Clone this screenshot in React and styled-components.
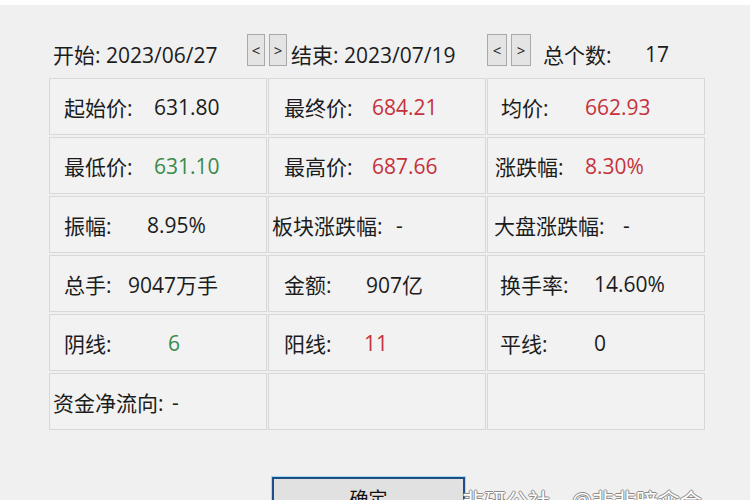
import React from 'react'
import styled, { createGlobalStyle } from 'styled-components'

const GlobalStyle = createGlobalStyle`
  html, body {
    margin: 0;
    padding: 0;
    background: #f0f0f0;
  }
  body {
    font-family: "Open Sans", "Noto Sans CJK SC", sans-serif;
  }
`

const RED = '#c5323d'
const GREEN = '#3a8a4c'

const rows = [
  [
    { pad: 14, w: 90, label: '起始价:', value: '631.80' },
    { pad: 15, w: 88, label: '最终价:', value: '684.21', color: RED },
    { pad: 13, w: 84, label: '均价:', value: '662.93', color: RED },
  ],
  [
    { pad: 14, w: 90, label: '最低价:', value: '631.10', color: GREEN },
    { pad: 15, w: 88, label: '最高价:', value: '687.66', color: RED },
    { pad: 7, w: 90, label: '涨跌幅:', value: '8.30%', color: RED },
  ],
  [
    { pad: 14, w: 83, label: '振幅:', value: '8.95%' },
    { pad: 3, w: 124, label: '板块涨跌幅:', value: '-' },
    { pad: 6, w: 129, label: '大盘涨跌幅:', value: '-' },
  ],
  [
    { pad: 14, w: 64, label: '总手:', value: '9047万手' },
    { pad: 15, w: 82, label: '金额:', value: '907亿' },
    { pad: 12, w: 94, label: '换手率:', value: '14.60%' },
  ],
  [
    { pad: 14, w: 104, label: '阴线:', value: '6', color: GREEN },
    { pad: 15, w: 80, label: '阳线:', value: '11', color: RED },
    { pad: 12, w: 94, label: '平线:', value: '0' },
  ],
  [
    { pad: 3, w: 119, label: '资金净流向:', value: '-' },
    null,
    null,
  ],
]

export default function App() {
  return (
    <>
      <GlobalStyle />
      <Window>
        <Body>
          <Header>
            <HeaderField w={194}>开始: 2023/06/27</HeaderField>
            <NavPair>
              <NavButton w={18}>&lt;</NavButton>
              <NavButton w={18}>&gt;</NavButton>
            </NavPair>
            <HeaderField w={200} lead={4}>结束: 2023/07/19</HeaderField>
            <NavPair>
              <NavButton w={20}>&lt;</NavButton>
              <NavButton w={20}>&gt;</NavButton>
            </NavPair>
            <HeaderField w={114} lead={12}>总个数:</HeaderField>
            <HeaderField>17</HeaderField>
          </Header>

          <StatGrid>
            {rows.flat().map((c, i) =>
              c ? (
                <Cell key={i} pad={c.pad}>
                  <Label w={c.w}>{c.label}</Label>
                  <Value color={c.color}>{c.value}</Value>
                </Cell>
              ) : (
                <Cell key={i} />
              )
            )}
          </StatGrid>

          <Footer>
            <OkButton>确定</OkButton>
          </Footer>
        </Body>
        <Watermark>非研公社，@非非暗伞合</Watermark>
      </Window>
    </>
  )
}

const Window = styled.div`
  position: relative;
  width: 750px;
  height: 500px;
  overflow: hidden;
  background: #f0f0f0;
  border-top: 5px solid #ffffff;
  box-sizing: border-box;
`

const Body = styled.div`
  display: flex;
  flex-direction: column;
  padding: 32px 0 0 49px;
  border-left: 6px solid #f6f6f6;
  margin-left: -6px;
`

const Header = styled.div`
  display: flex;
  align-items: center;
  height: 34px;
  padding-left: 4px;
  font-size: 21px;
  color: #1c1c1c;
`

const HeaderField = styled.span`
  display: inline-block;
  width: ${p => (p.w ? `${p.w}px` : 'auto')};
  padding-left: ${p => p.lead || 0}px;
  box-sizing: border-box;
  white-space: nowrap;
`

const NavPair = styled.div`
  display: flex;
  gap: 4px;
  height: 32px;
  align-self: flex-start;
  margin-top: -3px;
`

const NavButton = styled.div`
  width: ${p => p.w}px;
  height: 100%;
  box-sizing: border-box;
  border: 1px solid #a9a9a9;
  background: #e4e4e4;
  display: flex;
  align-items: center;
  justify-content: center;
  font-size: 15px;
  color: #222;
`

const StatGrid = styled.div`
  display: grid;
  grid-template-columns: repeat(3, 218px);
  grid-auto-rows: 57px;
  gap: 2px 1px;
  margin-top: 7px;
`

const Cell = styled.div`
  display: flex;
  align-items: center;
  padding-left: ${p => p.pad || 0}px;
  box-sizing: border-box;
  border: 1px solid #d8d8d8;
  background: #f2f2f2;
  font-size: 21px;
  color: #1c1c1c;
  white-space: nowrap;
`

const Label = styled.span`
  display: inline-block;
  width: ${p => p.w}px;
`

const Value = styled.span`
  color: ${p => p.color || '#1c1c1c'};
`

const Footer = styled.div`
  display: flex;
  padding-left: 223px;
  margin-top: 47px;
`

const OkButton = styled.div`
  width: 193px;
  height: 32px;
  box-sizing: border-box;
  border: 2px solid #1d4f86;
  outline: 1px solid #a6d8f2;
  background: #e1e1e1;
  display: flex;
  align-items: flex-start;
  justify-content: center;
  padding-top: 5px;
  font-size: 19px;
  color: #111;
`

const Watermark = styled.div`
  position: absolute;
  left: 462px;
  top: 478px;
  font-size: 22px;
  color: #ffffff;
  white-space: nowrap;
  text-shadow: -1px 0 #8a8a8a, 1px 0 #8a8a8a, 0 -1px #8a8a8a, 0 1px #8a8a8a;
`
